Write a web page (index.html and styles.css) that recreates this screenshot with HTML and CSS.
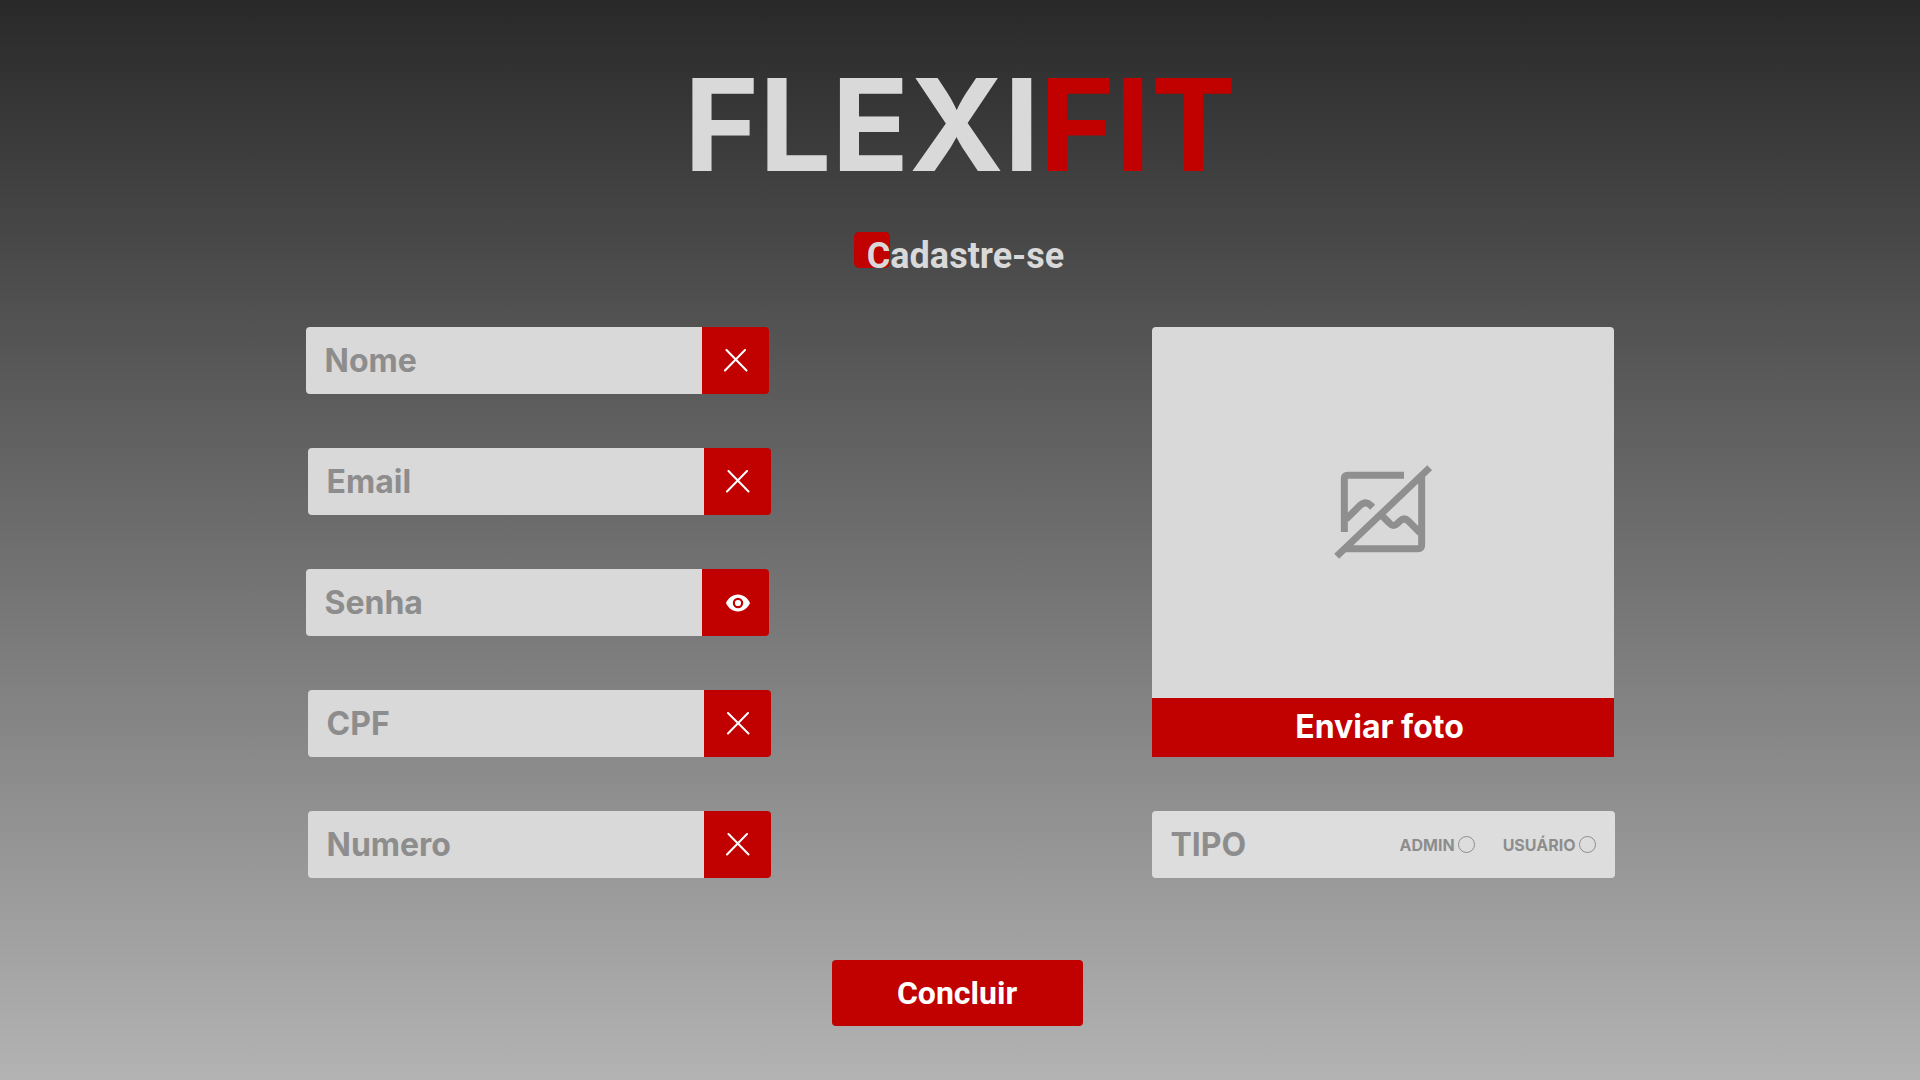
FILE: index.html
```html
<!DOCTYPE html>
<html lang="pt-BR">
<head>
<meta charset="utf-8">
<meta name="viewport" content="width=device-width, initial-scale=1">
<title>FlexiFit - Cadastre-se</title>
<link rel="stylesheet" href="styles.css">
</head>
<body>
<main class="page">
  <h1 class="logo">FLEXI<span class="logo-accent">FIT</span></h1>
  <h2 class="subtitle">Cadastre-se</h2>
  <form class="form">
    <div class="columns">
      <div class="fields">
        <div class="field">
          <input class="field-input" type="text" placeholder="Nome" aria-label="Nome">
          <button class="field-button" type="button" aria-label="Limpar nome"><svg class="icon" viewBox="0 0 24 24"><path d="M2.500 1L22.500 21.500M21 1L1 21.500"/></svg></button>
        </div>
        <div class="field field-shifted">
          <input class="field-input" type="email" placeholder="Email" aria-label="Email">
          <button class="field-button" type="button" aria-label="Limpar email"><svg class="icon" viewBox="0 0 24 24"><path d="M2.500 1L22.500 21.500M21 1L1 21.500"/></svg></button>
        </div>
        <div class="field">
          <input class="field-input" type="password" placeholder="Senha" aria-label="Senha">
          <button class="field-button field-button-eye" type="button" aria-label="Mostrar senha"><svg class="icon icon-eye" viewBox="0 0 24 24"><path fill-rule="evenodd" d="M12 3.500C6.500 3.500 1.900 7.200 0 12C1.900 16.800 6.500 20.500 12 20.500S22.100 16.800 24 12C22.100 7.200 17.500 3.500 12 3.500ZM12 17.200A5.200 5.200 0 1 1 12 6.800A5.200 5.200 0 0 1 12 17.200ZM12 8.900A3.100 3.100 0 1 0 12 15.100A3.100 3.100 0 0 0 12 8.900Z"/></svg></button>
        </div>
        <div class="field field-shifted">
          <input class="field-input" type="text" placeholder="CPF" aria-label="CPF">
          <button class="field-button" type="button" aria-label="Limpar CPF"><svg class="icon" viewBox="0 0 24 24"><path d="M2 1L22.500 21.500M22 1L2 21.500"/></svg></button>
        </div>
        <div class="field field-shifted">
          <input class="field-input" type="tel" placeholder="Numero" aria-label="Numero">
          <button class="field-button" type="button" aria-label="Limpar numero"><svg class="icon" viewBox="0 0 24 24"><path d="M2.500 1L22.500 21.500M21 1L1 21.500"/></svg></button>
        </div>
      </div>
      <div class="side">
        <div class="photo">
          <div class="photo-preview">
            <svg class="photo-icon" viewBox="72 46 294 282"><path d="M282 77H114Q103 77 103 88V247M108 209L149 168Q166 152 181 166L188 173M80 320L359 54M213 195L238 220Q250 234 263 221L270 214Q283 202 295 214L330 249M335 80V286Q335 297 324 297H104"/></svg>
          </div>
          <button class="photo-button" type="button">Enviar foto</button>
        </div>
        <div class="type" role="radiogroup" aria-labelledby="type-title">
          <span class="type-title" id="type-title">TIPO</span>
          <label class="option">ADMIN<input class="radio" type="radio" name="tipo" value="admin"></label>
          <label class="option">USUÁRIO<input class="radio" type="radio" name="tipo" value="usuario"></label>
        </div>
      </div>
    </div>
    <button class="submit" type="submit">Concluir</button>
  </form>
</main>
</body>
</html>
```
FILE: styles.css
```css
* {
  box-sizing: border-box;
}

body {
  margin: 0;
  font-family: Inter, sans-serif;
}

button,
input {
  margin: 0;
  border: 0;
  font-family: inherit;
}

button {
  padding: 0;
  background: #c10000;
  color: #fff;
  cursor: pointer;
}

.page {
  display: flex;
  flex-direction: column;
  align-items: center;
  min-height: 100vh;
  padding: 47px 24px 54px;
  background: linear-gradient(#292929, #b3b3b3);
}

.logo {
  margin: 0;
  color: #d9d9d9;
  font-size: 128px;
  font-weight: 700;
  line-height: 156px;
}

.logo-accent {
  color: #c10000;
}

.subtitle {
  position: relative;
  z-index: 0;
  margin: 29px 0 47px;
  padding: 0 2px 0 13px;
  color: #d9d9d9;
  font-family: Roboto, sans-serif;
  font-size: 36px;
  font-weight: 700;
  line-height: 48px;
}

.subtitle::before {
  content: "";
  position: absolute;
  z-index: -1;
  top: 0;
  left: 0;
  width: 36px;
  height: 36px;
  border-radius: 5px;
  background: #c10000;
}

.form {
  display: flex;
  flex-direction: column;
  align-items: center;
  width: 100%;
  max-width: 1309px;
}

.columns {
  display: flex;
  flex-wrap: wrap;
  justify-content: space-between;
  gap: 54px;
  width: 100%;
}

.fields,
.side {
  display: flex;
  flex-direction: column;
  gap: 54px;
  width: 463px;
  max-width: 100%;
}

.field {
  display: flex;
  height: 67px;
  border-radius: 4px;
  overflow: hidden;
}

.field-shifted {
  margin: 0 -2px 0 2px;
}

.field-input {
  flex: 1;
  min-width: 0;
  padding: 0 19px;
  background: #d9d9d9;
  color: #8d8d8d;
  font-size: 32px;
  font-weight: 700;
}

.field-input::placeholder {
  color: #8d8d8d;
  opacity: 1;
}

.field-button {
  display: flex;
  align-items: center;
  justify-content: center;
  width: 67px;
  padding-left: 2px;
}

.field-button-eye {
  padding-left: 6px;
}

.icon {
  width: 24px;
  height: 24px;
  fill: none;
  stroke: #fff;
  stroke-width: 2;
  stroke-linecap: round;
}

.icon-eye {
  fill: #fff;
  stroke: none;
}

.photo {
  display: flex;
  flex-direction: column;
  margin-right: 1px;
  border-radius: 4px 4px 0 0;
  overflow: hidden;
}

.photo-preview {
  display: flex;
  align-items: center;
  justify-content: center;
  height: 371px;
  padding-bottom: 2px;
  background: #d9d9d9;
}

.photo-icon {
  width: 98px;
  height: 94px;
  fill: none;
  stroke: #8f8f8f;
  stroke-width: 21;
}

.photo-button {
  height: 59px;
  padding: 0 6px 2px 0;
  font-size: 32px;
  font-weight: 700;
}

.type {
  display: flex;
  align-items: center;
  gap: 28px;
  height: 67px;
  padding: 0 19px;
  border-radius: 4px;
  background: #ddd;
  color: #8d8d8d;
}

.type-title {
  margin-right: auto;
  font-size: 32px;
  font-weight: 700;
}

.option {
  display: flex;
  align-items: center;
  gap: 3px;
  font-size: 16px;
  font-weight: 700;
}

.radio {
  appearance: none;
  width: 17px;
  height: 17px;
  border: 1px solid #8d8d8d;
  border-radius: 50%;
}

.radio:checked {
  background: #c10000;
}

.submit {
  width: 251px;
  height: 66px;
  margin-top: 82px;
  margin-right: 6px;
  border-radius: 4px;
  font-family: Roboto, sans-serif;
  font-size: 32px;
  font-weight: 700;
}
```
